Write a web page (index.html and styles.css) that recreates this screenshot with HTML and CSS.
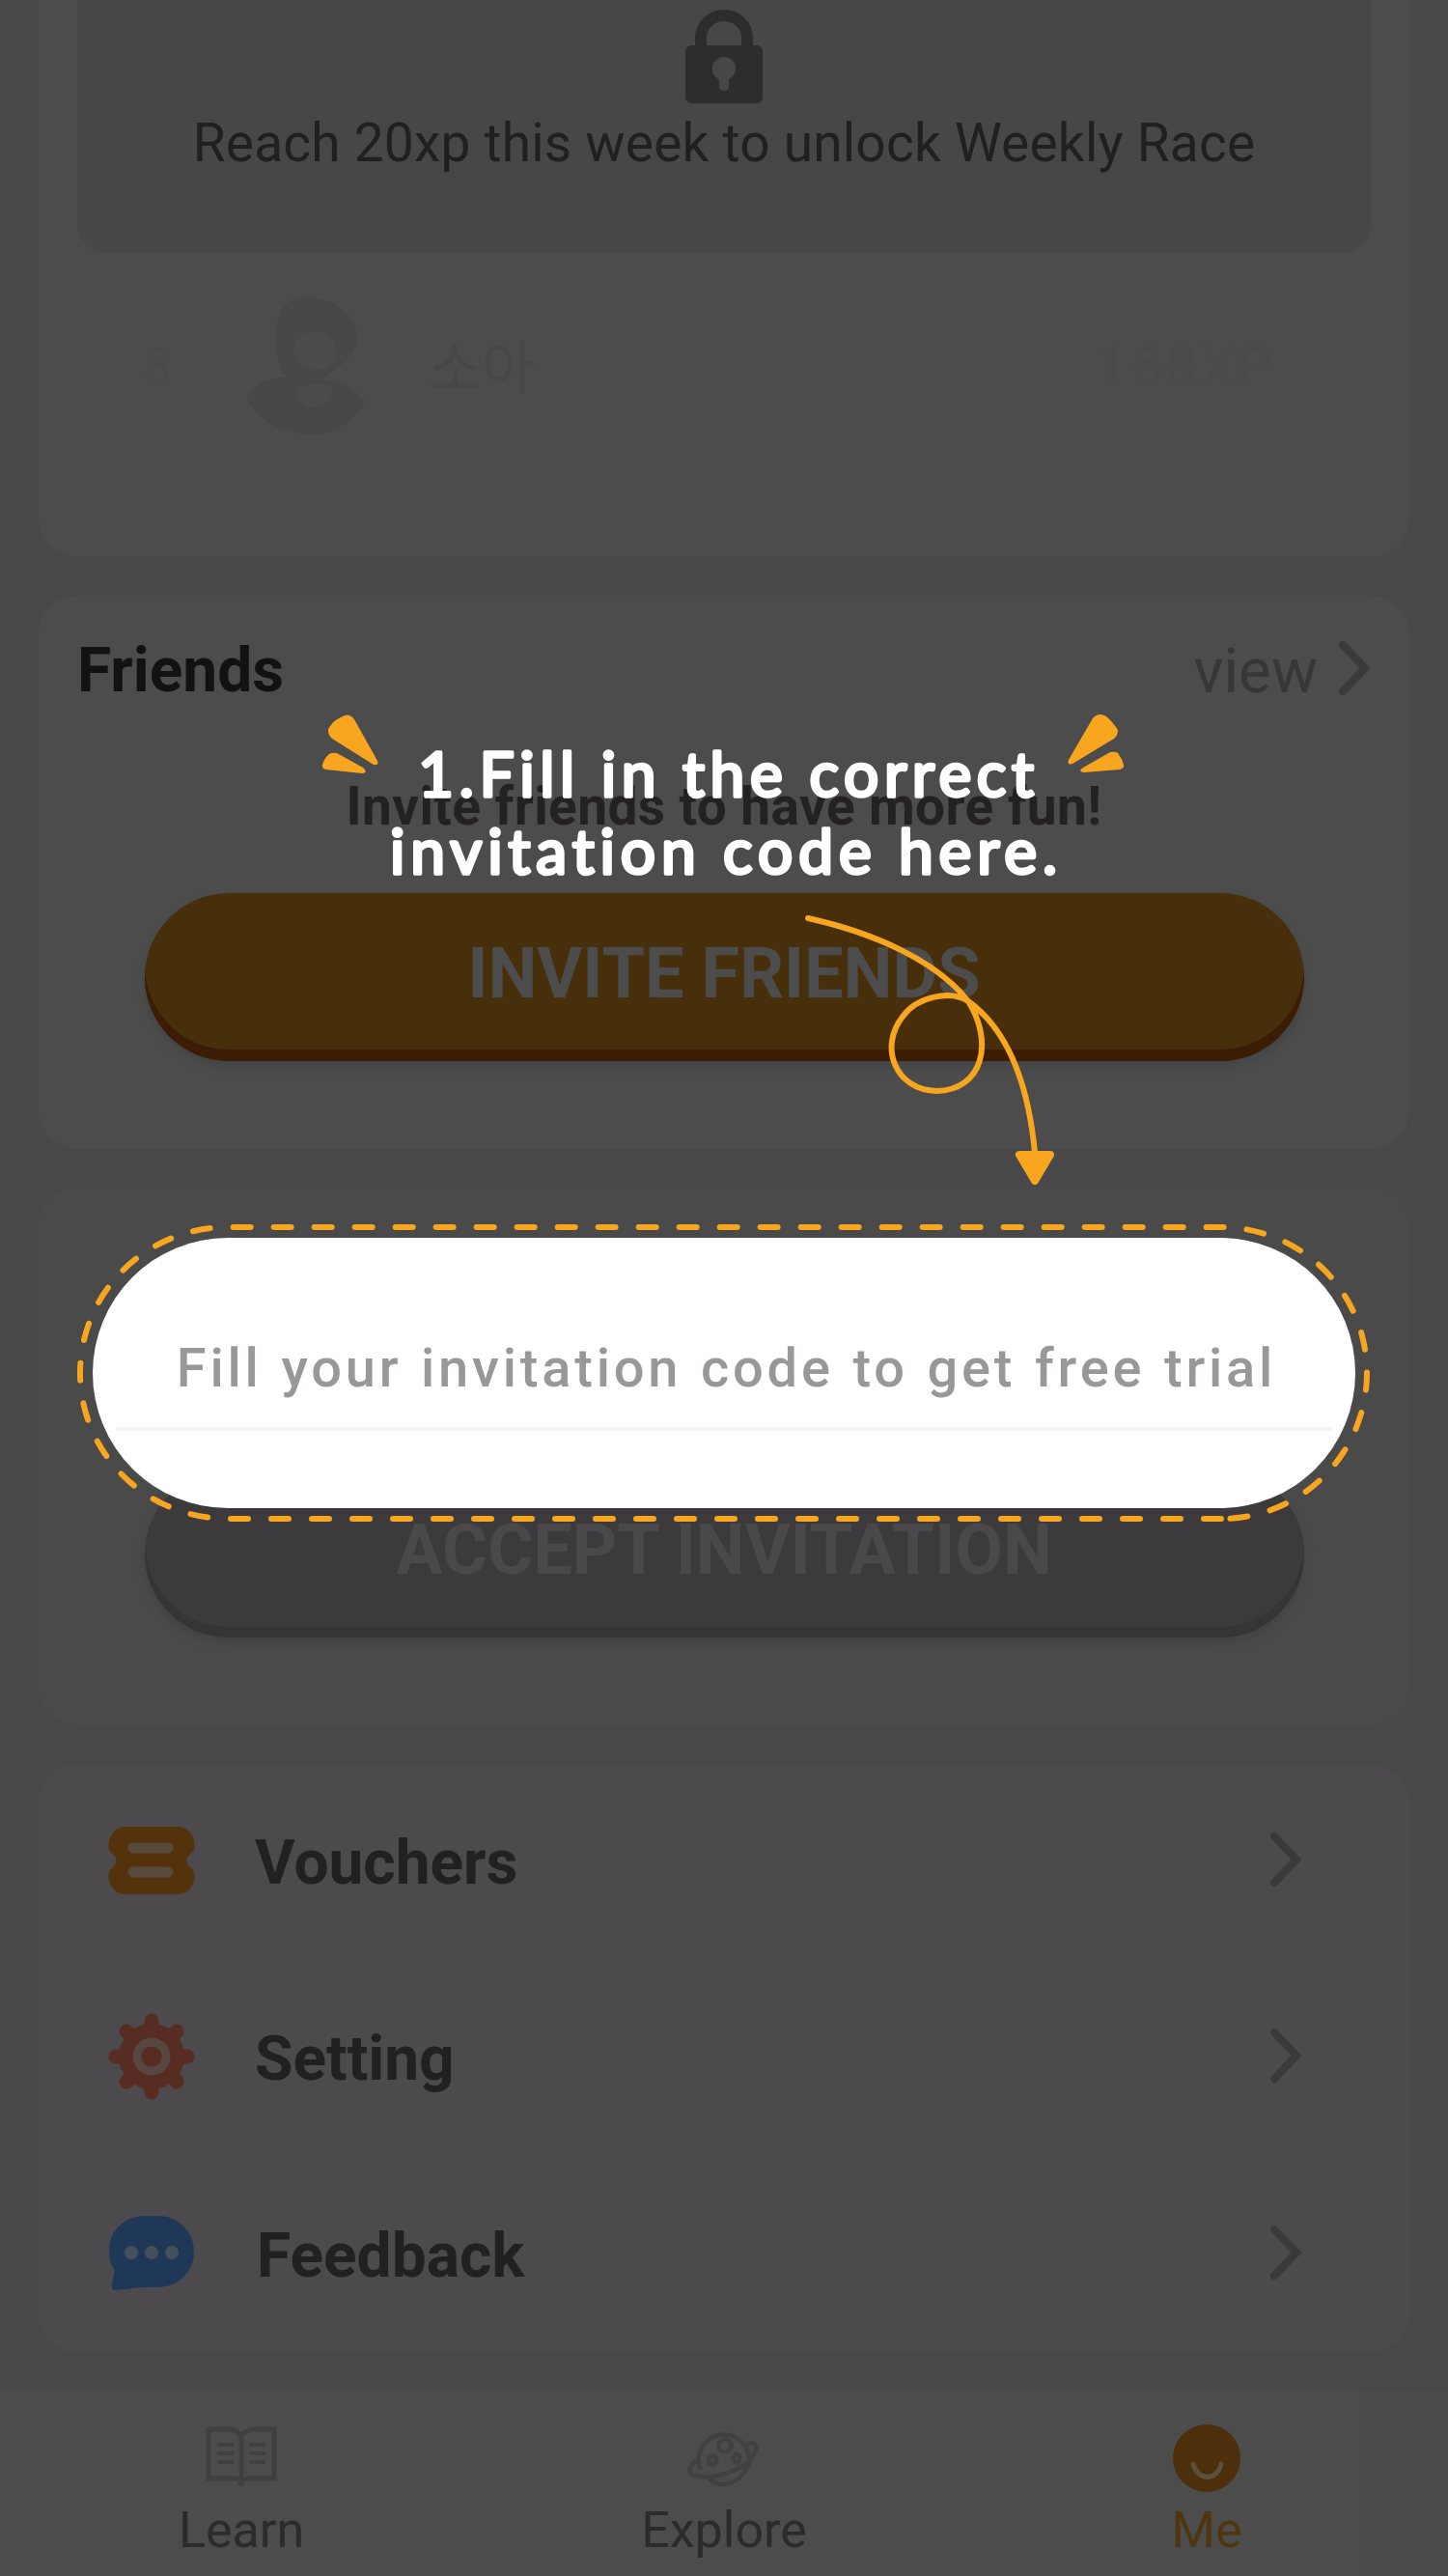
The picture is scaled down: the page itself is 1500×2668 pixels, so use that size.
FILE: index.html
```html
<!DOCTYPE html>
<html lang="en">
<head>
<meta charset="utf-8">
<title>Me</title>
<link rel="stylesheet" href="styles.css">
</head>
<body>
<main class="screen">
  <section class="card race">
    <div class="locked">
      <svg class="lock" width="80" height="97" viewBox="0 0 80 97"><path d="M16 42V29a24 23 0 0 1 48 0v13" fill="none" stroke="#2d2d2d" stroke-width="12"/><rect y="37" width="80" height="60" rx="6" fill="#2d2d2d"/><path d="M40 49a12 12 0 0 0-5 23v8q0 4 5 4t5-4v-8a12 12 0 0 0-5-23z" fill="#474747"/></svg>
      <p class="locked-text">Reach 20xp this week to unlock Weekly Race</p>
    </div>
    <div class="rank">
      <span class="place">3</span>
      <svg class="avatar" width="126" height="146" viewBox="0 0 126 146"><path d="M62 2c26 0 53 16 54 40 0 26-30 38-36 44 22 4 38 14 44 24-10 20-32 34-54 34-32 0-60-16-68-38 6-16 26-22 42-21C34 75 32 60 32 40 32 18 42 2 62 2z" fill="#474747"/><ellipse cx="72" cy="57" rx="22" ry="20" fill="#4b4b4b"/><path d="M53 98q20-14 38 0-4 18-19 18T53 98z" fill="#4b4b4b"/></svg>
      <span class="name">소아</span>
      <span class="xp">168XP</span>
    </div>
  </section>

  <section class="card friends">
    <header class="friends-head">
      <h2>Friends</h2>
      <a class="view">view<svg width="34" height="60" viewBox="0 0 34 60"><path d="M5 5l23 24L5 53"/></svg></a>
    </header>
    <p class="friends-text">Invite friends to have more fun!</p>
    <button class="btn btn-invite"><span>INVITE FRIENDS</span></button>
  </section>

  <section class="card code">
    <button class="btn btn-accept"><span>ACCEPT INVITATION</span></button>
  </section>

  <nav class="card menu">
    <a class="item">
      <svg class="icon" width="90" height="70" viewBox="0 0 90 70"><path d="M17 0h56q12 1 16 14 2 12-4 14-7 7 0 14 6 2 4 14-4 13-16 14H17Q5 69 1 56q-2-12 4-14 7-7 0-14-6-2-4-14Q5 1 17 0z" fill="#54330c"/><path d="M26 22h36M26 47h36" stroke="#574a3c" stroke-width="11" stroke-linecap="round"/></svg>
      <span class="label">Vouchers</span><svg class="chev" width="34" height="60" viewBox="0 0 34 60"><path d="M5 5l23 24L5 53"/></svg>
    </a>
    <a class="item">
      <svg class="icon" width="90" height="90" viewBox="-45 -45 90 90"><circle r="34" fill="#572c22"/><path d="M0-37V37M-37 0H37M-26-26L26 26M-26 26L26-26" stroke="#572c22" stroke-width="15" stroke-linecap="round"/><circle r="15" fill="#572c22" stroke="#584640" stroke-width="9"/></svg>
      <span class="label">Setting</span><svg class="chev" width="34" height="60" viewBox="0 0 34 60"><path d="M5 5l23 24L5 53"/></svg>
    </a>
    <a class="item">
      <svg class="icon" width="90" height="78" viewBox="0 0 90 78"><path d="M38 0h13c22 0 38 16 38 37S73 74 51 74H34l-26 3q-5 0-4-6l3-15C2 50 1 43 1 37 1 16 16 0 38 0z" fill="#1f3857"/><g fill="#45505b"><circle cx="24" cy="38" r="7"/><circle cx="45" cy="38" r="7"/><circle cx="66" cy="38" r="7"/></g></svg>
      <span class="label feedback">Feedback</span><svg class="chev" width="34" height="60" viewBox="0 0 34 60"><path d="M5 5l23 24L5 53"/></svg>
    </a>
  </nav>

  <footer class="tabs">
    <a class="tab"><svg width="76" height="70" viewBox="0 0 76 70" fill="none" stroke="#404040" stroke-width="5"><path d="M38 12Q33 5 24 5H4v51h25q9 0 9 8 0-8 9-8h25V5H52q-9 0-14 7zV64"/><path d="M13 21h17M13 30h17M13 39h17M46 21h17M46 30h17M46 39h17" stroke-width="4"/></svg><span>Learn</span></a>
    <a class="tab"><svg width="76" height="70" viewBox="0 0 76 70" fill="none" stroke="#414141" stroke-width="4.500"><path d="M63 43A26 26 0 1 0 14 47M22 56C33 66 54 64 62 43"/><path d="M12 36C1 43-1 51 8 53c20 5 50-6 59-19 7-9 5-16-5-14"/><circle cx="39" cy="22" r="6.500"/><circle cx="26" cy="37" r="4.500"/><ellipse cx="51" cy="35" rx="3.500" ry="4.500"/></svg><span>Explore</span></a>
    <a class="tab active"><svg width="76" height="70" viewBox="0 0 76 70"><circle cx="38" cy="35" r="35" fill="#4d300b"/><path d="M24 41c5 18 25 18 29 0" fill="none" stroke="#5c503b" stroke-width="5" stroke-linecap="round"/></svg><span>Me</span></a>
  </footer>
</main>

<div class="guide">
  <div class="spotlight"><span>Fill your invitation code to get free trial</span></div>
  <svg class="guide-art" width="1500" height="2668" viewBox="0 0 1500 2668" fill="none" stroke="#f8a51f" stroke-width="6" stroke-linecap="round" stroke-linejoin="round">
    <path d="M1265 1573H236A153 151 0 0 1 236 1271H1265A151 151 0 0 1 1265 1573" stroke-dasharray="18 24"/>
    <path d="M837 951C905 966 970 995 1003 1037C1030 1080 1018 1129 970 1130C928 1129 910 1085 935 1053C950 1032 985 1025 1003 1037C1043 1066 1065 1120 1072 1194"/>
    <path d="M1056 1196H1088L1072 1223Z" fill="#f8a51f" stroke-width="8"/>
    <g fill="#f8a51f" stroke="none">
      <path d="M353 743Q361 737 367 745L391 788Q393 793 387 792L344 765Q337 758 342 752Q346 746 353 743zM341 781Q344 779 349 780L376 795Q382 800 375 801L338 797Q333 796 334 792Q336 785 341 781z"/>
      <path d="M1146 742Q1138 737 1132 744L1107 787Q1105 793 1111 791L1154 765Q1161 758 1156 753Q1152 747 1146 742zM1158 780Q1155 778 1150 779L1122 795Q1116 799 1123 800L1160 797Q1165 795 1164 792Q1162 785 1158 780z"/>
    </g>
    <g class="guide-text" fill="#fff" stroke="#fff" stroke-width="3.500">
      <text x="433" y="825" textLength="638">1.Fill in the correct</text>
      <text x="404" y="905" textLength="691">invitation code here.</text>
    </g>
  </svg>
</div>
</body>
</html>
```
FILE: styles.css
```css
* { box-sizing: border-box; margin: 0; padding: 0; }
body { width: 1500px; height: 2668px; overflow: hidden; position: relative; background: #484848; font-family: Roboto, "Noto Sans CJK KR", sans-serif; }
.screen { display: flex; flex-direction: column; gap: 40px; height: 2668px; }
.card { margin: 0 40px; border-radius: 40px; background: #4c4c4c; }

.race { height: 577px; padding: 0 40px; border-radius: 0 0 40px 40px; }
.locked { height: 263px; display: flex; flex-direction: column; align-items: center; padding-top: 10px; border-radius: 0 0 32px 32px; background: #474747; }
.locked-text { margin-top: 9px; font-size: 55px; line-height: 64px; letter-spacing: 0.22px; color: #202020; white-space: nowrap; }
.rank { display: flex; align-items: center; height: 232px; padding: 0 98px 0 68px; color: #474747; font-size: 54px; }
.place { width: 106px; color: #4a4a4a; }
.name { margin-left: 64px; margin-top: -6px; font-size: 60px; font-family: "Noto Sans CJK KR", sans-serif; }
.xp { margin-left: auto; font-size: 58px; letter-spacing: 3px; color: #4a4a49; }

.friends { height: 573px; padding: 38px 40px 0; }
.friends-head { display: flex; justify-content: space-between; align-items: center; height: 80px; }
h2 { font-size: 64px; line-height: 80px; color: #121212; }
.view { display: flex; align-items: center; gap: 21px; font-size: 64px; color: #373737; }
.view svg, .chev { fill: none; stroke: #3b3a3b; stroke-width: 8; stroke-linecap: round; }
.view svg { margin-top: -4px; }
.friends-text { margin-top: 68px; text-align: center; font-weight: 700; font-size: 55px; line-height: 64px; letter-spacing: 0.4px; color: #232122; }

.btn { display: flex; align-items: center; justify-content: center; width: 1201px; height: 174px; margin: 0 auto; padding-bottom: 7px; border: 0; border-radius: 87px; font-family: inherit; font-weight: 700; font-size: 72px; }
.btn-invite { margin-top: 58px; background: #482f0c; color: #4c4c4c; box-shadow: inset 0 -12px #3c1c04, 0 6px 8px #434546; }
.btn-accept { background: #3c3a3c; color: #4a484a; box-shadow: inset 0 -11px #363436, 0 6px 10px #444244; }

.code { height: 557px; padding-top: 292px; background: #4b4a4b; }
.menu { height: 609px; padding: 0 71px; background: #4c4a4c; }
.item { display: flex; align-items: center; height: 203px; border-bottom: 3px solid #4b494b; }
.item:last-child { border-bottom: 0; padding-bottom: 2px; }
.icon { margin-left: 1px; }
.label { margin-left: 62px; padding-top: 5px; font-size: 64px; font-weight: 700; color: #222023; }
.feedback { margin-left: 64px; }
.chev { margin-left: auto; margin-right: 40px; }

.tabs { display: flex; flex: 1; background: linear-gradient(90deg, #4c4c4c 1408px, #4c494c 1408px); }
.tab { flex: 1; display: flex; flex-direction: column; align-items: center; padding-top: 35px; font-size: 52px; line-height: 60px; color: #2b2b2b; }
.tab span { margin-top: 10px; }
.active { color: #50360e; }

.guide { position: absolute; inset: 0; }
.spotlight { position: absolute; left: 96px; top: 1282px; width: 1308px; height: 280px; display: flex; justify-content: center; padding: 103px 0 0 5px; border-radius: 140px; background: linear-gradient(#f5f3f5, #f5f3f5) center 196px / 1260px 4px no-repeat #fff; color: #99979a; font-size: 56px; font-weight: 500; line-height: 64px; white-space: nowrap; letter-spacing: 3.8px; word-spacing: 2px; }
.guide-art { position: absolute; left: 0; top: 0; }
.guide-text { font-family: Lato, sans-serif; font-weight: 400; font-size: 64px; font-variant-ligatures: none; }
```
